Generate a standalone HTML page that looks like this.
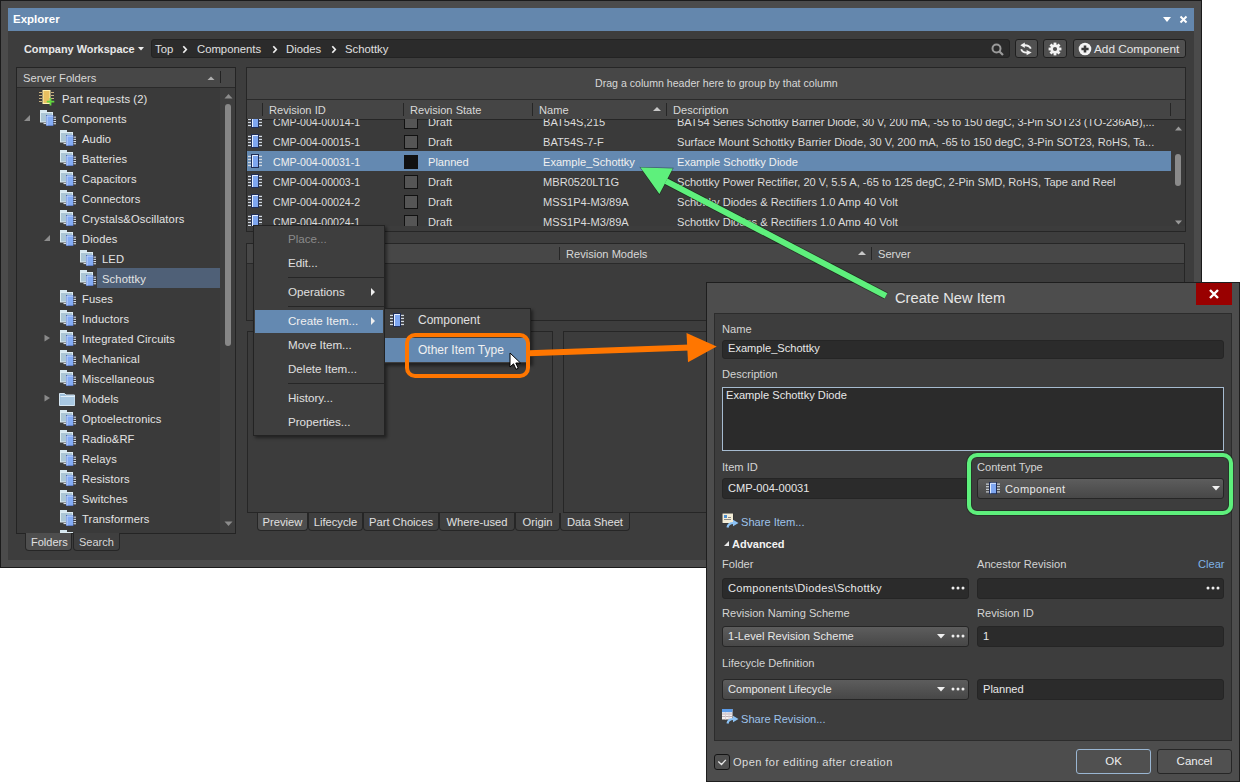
<!DOCTYPE html>
<html><head><meta charset="utf-8"><title>Explorer - Create New Item</title>
<style>
html,body{margin:0;padding:0;}
body{width:1240px;height:782px;position:relative;overflow:hidden;background:#ffffff;font-family:"Liberation Sans", sans-serif;}
.a{position:absolute;}
.t{white-space:pre;}
svg.a{overflow:visible;}
</style></head><body>
<div class="a" style="left:0px;top:0px;width:1202px;height:568px;background:#4b4b4b;border:1px solid #1b1b1b;box-sizing:border-box;"></div>
<div class="a" style="left:8px;top:8px;width:1186px;height:23px;background:#6487ad;"></div>
<div class="a t" style="left:13px;top:8px;font-size:11.5px;line-height:23px;color:#ffffff;font-weight:bold;">Explorer</div>
<svg class="a" style="left:1160px;top:14px" width="32" height="12" viewBox="0 0 32 12"><path d="M3 3h8l-4 5z" fill="#fff"/><path d="M20.5 2.5l6 6M26.5 2.5l-6 6" stroke="#fff" stroke-width="2"/></svg>
<div class="a" style="left:8px;top:31px;width:1186px;height:529px;background:#3d3d3d;"></div>
<div class="a t" style="left:24px;top:39px;font-size:10.9px;line-height:20px;color:#e8e8e8;font-weight:bold;">Company Workspace</div>
<svg class="a" style="left:137px;top:46px" width="8" height="6" viewBox="0 0 8 6"><path d="M1 1h6l-3 3.5z" fill="#eee"/></svg>
<div class="a" style="left:151px;top:39px;width:859px;height:19px;background:#2b2b2b;border:1px solid #232323;box-sizing:border-box;border-radius:3px;"></div>
<div class="a t" style="left:155px;top:39px;font-size:11.3px;line-height:20px;color:#e0e0e0;">Top</div>
<div class="a t" style="left:197px;top:39px;font-size:11.3px;line-height:20px;color:#e0e0e0;">Components</div>
<div class="a t" style="left:286px;top:39px;font-size:11.3px;line-height:20px;color:#e0e0e0;">Diodes</div>
<div class="a t" style="left:345px;top:39px;font-size:11.3px;line-height:20px;color:#e0e0e0;">Schottky</div>
<svg class="a" style="left:181px;top:45px" width="8" height="10" viewBox="0 0 8 10"><path d="M2.3 1.2l3 3.3l-3 3.3" stroke="#f0f0f0" stroke-width="1.7" fill="none"/></svg>
<svg class="a" style="left:271px;top:45px" width="8" height="10" viewBox="0 0 8 10"><path d="M2.3 1.2l3 3.3l-3 3.3" stroke="#f0f0f0" stroke-width="1.7" fill="none"/></svg>
<svg class="a" style="left:330px;top:45px" width="8" height="10" viewBox="0 0 8 10"><path d="M2.3 1.2l3 3.3l-3 3.3" stroke="#f0f0f0" stroke-width="1.7" fill="none"/></svg>
<svg class="a" style="left:990px;top:42px" width="16" height="16" viewBox="0 0 16 16"><circle cx="6.5" cy="6.5" r="4" stroke="#9a9a9a" stroke-width="2" fill="none"/><path d="M9.5 9.5l3.5 3.5" stroke="#9a9a9a" stroke-width="2.2"/></svg>
<div class="a" style="left:1015px;top:39px;width:23px;height:19px;background:#505050;border:1px solid #1f1f1f;box-sizing:border-box;border-radius:3px;"></div>
<div class="a" style="left:1043px;top:39px;width:24px;height:19px;background:#505050;border:1px solid #1f1f1f;box-sizing:border-box;border-radius:3px;"></div>
<div class="a" style="left:1073px;top:39px;width:113px;height:19px;background:#505050;border:1px solid #1f1f1f;box-sizing:border-box;border-radius:3px;"></div>
<svg class="a" style="left:1015px;top:40px" width="22" height="18" viewBox="0 0 22 18"><path d="M9 5.3Q14 5 15.8 8.6" stroke="#f2f2f2" stroke-width="1.9" fill="none"/><path d="M5.3 5.3L9.8 2.6V8z" fill="#f2f2f2"/><path d="M6.2 9.2Q7.5 12.8 12 12.6" stroke="#f2f2f2" stroke-width="1.9" fill="none"/><path d="M16.7 12.6L11.6 9.9V15.3z" fill="#f2f2f2"/></svg>
<svg class="a" style="left:1048px;top:42px" width="14" height="14" viewBox="0 0 14 14"><g fill="#f2f2f2"><rect x="5.6" y="0.6" width="2.8" height="3" transform="rotate(0 7 7)"/><rect x="5.6" y="0.6" width="2.8" height="3" transform="rotate(45 7 7)"/><rect x="5.6" y="0.6" width="2.8" height="3" transform="rotate(90 7 7)"/><rect x="5.6" y="0.6" width="2.8" height="3" transform="rotate(135 7 7)"/><rect x="5.6" y="0.6" width="2.8" height="3" transform="rotate(180 7 7)"/><rect x="5.6" y="0.6" width="2.8" height="3" transform="rotate(225 7 7)"/><rect x="5.6" y="0.6" width="2.8" height="3" transform="rotate(270 7 7)"/><rect x="5.6" y="0.6" width="2.8" height="3" transform="rotate(315 7 7)"/><circle cx="7" cy="7" r="4.6"/></g><circle cx="7" cy="7" r="2.1" fill="#505050"/></svg>
<svg class="a" style="left:1078px;top:42px" width="14" height="14" viewBox="0 0 14 14"><circle cx="7" cy="7" r="6.3" fill="#f4f4f4"/><path d="M7 3.4v7.2M3.4 7h7.2" stroke="#3a3a3a" stroke-width="2.6"/></svg>
<div class="a t" style="left:1094px;top:39px;font-size:11.8px;line-height:20px;color:#e8e8e8;">Add Component</div>
<div class="a" style="left:16px;top:67px;width:220px;height:467px;background:#3a3a3a;border:1px solid #242424;box-sizing:border-box;"></div>
<div class="a" style="left:17px;top:68px;width:218px;height:20px;background:#474747;border-bottom:1px solid #2a2a2a;box-sizing:border-box;"></div>
<div class="a t" style="left:23px;top:69px;font-size:11.2px;line-height:19px;color:#d8d8d8;">Server Folders</div>
<svg class="a" style="left:206px;top:75px" width="10" height="6" viewBox="0 0 10 6"><path d="M1.5 5h7l-3.5-3.5z" fill="#b0b0b0"/></svg>
<div class="a" style="left:220px;top:71px;width:1px;height:12px;background:#222;"></div>
<div class="a" style="left:220px;top:88px;width:15px;height:445px;background:#3e3e3e;"></div>
<svg class="a" style="left:224px;top:93px" width="9" height="6" viewBox="0 0 9 6"><path d="M0.5 5.5h8l-4-4.5z" fill="#8c8c8c"/></svg>
<div class="a" style="left:225px;top:104px;width:6px;height:242px;background:#888;border-radius:3px;"></div>
<svg class="a" style="left:224px;top:521px" width="9" height="6" viewBox="0 0 9 6"><path d="M0.5 0.5h8l-4 4.5z" fill="#8c8c8c"/></svg>
<div class="a" style="left:17px;top:88px;width:203px;height:445px;overflow:hidden;">
<svg class="a" style="left:22px;top:2px" width="17" height="17" viewBox="0 0 17 17"><rect x="4" y="0.5" width="7" height="13" fill="#e8c060" stroke="#fff2b0" stroke-width="1"/><rect x="0" y="2" width="3" height="1" fill="#c8b080"/><rect x="12" y="2" width="3" height="1" fill="#c8b080"/><rect x="0" y="5" width="3" height="1" fill="#c8b080"/><rect x="12" y="5" width="3" height="1" fill="#c8b080"/><rect x="0" y="8" width="3" height="1" fill="#c8b080"/><rect x="12" y="8" width="3" height="1" fill="#c8b080"/><rect x="0" y="11" width="3" height="1" fill="#c8b080"/><rect x="12" y="11" width="3" height="1" fill="#c8b080"/><path d="M11.5 8v7.5M7.8 11.7h7.5" stroke="#62d640" stroke-width="1.8"/></svg>
<div class="a t" style="left:45px;top:1px;font-size:11.2px;line-height:20px;color:#e4e4e4;letter-spacing:0.12px;">Part requests (2)</div>
<svg class="a" style="left:6px;top:26px" width="8" height="8" viewBox="0 0 8 8"><path d="M7 1v6h-6z" fill="#8c8c8c"/></svg>
<svg class="a" style="left:23px;top:22px" width="17" height="17" viewBox="0 0 17 17"><rect x="0" y="0" width="7" height="2.5" fill="#d5e6ef"/><rect x="0.5" y="2.5" width="12" height="9.5" fill="#abc5d4" stroke="#dcebf3" stroke-width="1"/><rect x="6" y="5" width="7.5" height="11" fill="#3a56a0"/><rect x="6.5" y="5.5" width="6.5" height="10" fill="#84acf4"/><path d="M7 15.5V6H13" stroke="#c4d8ff" stroke-width="1" fill="none"/><rect x="13.5" y="6.6" width="2.5" height="1.1" fill="#d5dce5"/><rect x="13.5" y="8.8" width="2.5" height="1.1" fill="#d5dce5"/><rect x="13.5" y="11.0" width="2.5" height="1.1" fill="#d5dce5"/><rect x="13.5" y="13.2" width="2.5" height="1.1" fill="#d5dce5"/><rect x="3.5" y="13" width="2.5" height="1.1" fill="#d5dce5"/></svg>
<div class="a t" style="left:45px;top:21px;font-size:11.2px;line-height:20px;color:#e4e4e4;letter-spacing:0.12px;">Components</div>
<svg class="a" style="left:43px;top:42px" width="17" height="17" viewBox="0 0 17 17"><rect x="0" y="0" width="7" height="2.5" fill="#d5e6ef"/><rect x="0.5" y="2.5" width="12" height="9.5" fill="#abc5d4" stroke="#dcebf3" stroke-width="1"/><rect x="6" y="5" width="7.5" height="11" fill="#3a56a0"/><rect x="6.5" y="5.5" width="6.5" height="10" fill="#84acf4"/><path d="M7 15.5V6H13" stroke="#c4d8ff" stroke-width="1" fill="none"/><rect x="13.5" y="6.6" width="2.5" height="1.1" fill="#d5dce5"/><rect x="13.5" y="8.8" width="2.5" height="1.1" fill="#d5dce5"/><rect x="13.5" y="11.0" width="2.5" height="1.1" fill="#d5dce5"/><rect x="13.5" y="13.2" width="2.5" height="1.1" fill="#d5dce5"/><rect x="3.5" y="13" width="2.5" height="1.1" fill="#d5dce5"/></svg>
<div class="a t" style="left:65px;top:41px;font-size:11.2px;line-height:20px;color:#e4e4e4;letter-spacing:0.12px;">Audio</div>
<svg class="a" style="left:43px;top:62px" width="17" height="17" viewBox="0 0 17 17"><rect x="0" y="0" width="7" height="2.5" fill="#d5e6ef"/><rect x="0.5" y="2.5" width="12" height="9.5" fill="#abc5d4" stroke="#dcebf3" stroke-width="1"/><rect x="6" y="5" width="7.5" height="11" fill="#3a56a0"/><rect x="6.5" y="5.5" width="6.5" height="10" fill="#84acf4"/><path d="M7 15.5V6H13" stroke="#c4d8ff" stroke-width="1" fill="none"/><rect x="13.5" y="6.6" width="2.5" height="1.1" fill="#d5dce5"/><rect x="13.5" y="8.8" width="2.5" height="1.1" fill="#d5dce5"/><rect x="13.5" y="11.0" width="2.5" height="1.1" fill="#d5dce5"/><rect x="13.5" y="13.2" width="2.5" height="1.1" fill="#d5dce5"/><rect x="3.5" y="13" width="2.5" height="1.1" fill="#d5dce5"/></svg>
<div class="a t" style="left:65px;top:61px;font-size:11.2px;line-height:20px;color:#e4e4e4;letter-spacing:0.12px;">Batteries</div>
<svg class="a" style="left:43px;top:82px" width="17" height="17" viewBox="0 0 17 17"><rect x="0" y="0" width="7" height="2.5" fill="#d5e6ef"/><rect x="0.5" y="2.5" width="12" height="9.5" fill="#abc5d4" stroke="#dcebf3" stroke-width="1"/><rect x="6" y="5" width="7.5" height="11" fill="#3a56a0"/><rect x="6.5" y="5.5" width="6.5" height="10" fill="#84acf4"/><path d="M7 15.5V6H13" stroke="#c4d8ff" stroke-width="1" fill="none"/><rect x="13.5" y="6.6" width="2.5" height="1.1" fill="#d5dce5"/><rect x="13.5" y="8.8" width="2.5" height="1.1" fill="#d5dce5"/><rect x="13.5" y="11.0" width="2.5" height="1.1" fill="#d5dce5"/><rect x="13.5" y="13.2" width="2.5" height="1.1" fill="#d5dce5"/><rect x="3.5" y="13" width="2.5" height="1.1" fill="#d5dce5"/></svg>
<div class="a t" style="left:65px;top:81px;font-size:11.2px;line-height:20px;color:#e4e4e4;letter-spacing:0.12px;">Capacitors</div>
<svg class="a" style="left:43px;top:102px" width="17" height="17" viewBox="0 0 17 17"><rect x="0" y="0" width="7" height="2.5" fill="#d5e6ef"/><rect x="0.5" y="2.5" width="12" height="9.5" fill="#abc5d4" stroke="#dcebf3" stroke-width="1"/><rect x="6" y="5" width="7.5" height="11" fill="#3a56a0"/><rect x="6.5" y="5.5" width="6.5" height="10" fill="#84acf4"/><path d="M7 15.5V6H13" stroke="#c4d8ff" stroke-width="1" fill="none"/><rect x="13.5" y="6.6" width="2.5" height="1.1" fill="#d5dce5"/><rect x="13.5" y="8.8" width="2.5" height="1.1" fill="#d5dce5"/><rect x="13.5" y="11.0" width="2.5" height="1.1" fill="#d5dce5"/><rect x="13.5" y="13.2" width="2.5" height="1.1" fill="#d5dce5"/><rect x="3.5" y="13" width="2.5" height="1.1" fill="#d5dce5"/></svg>
<div class="a t" style="left:65px;top:101px;font-size:11.2px;line-height:20px;color:#e4e4e4;letter-spacing:0.12px;">Connectors</div>
<svg class="a" style="left:43px;top:122px" width="17" height="17" viewBox="0 0 17 17"><rect x="0" y="0" width="7" height="2.5" fill="#d5e6ef"/><rect x="0.5" y="2.5" width="12" height="9.5" fill="#abc5d4" stroke="#dcebf3" stroke-width="1"/><rect x="6" y="5" width="7.5" height="11" fill="#3a56a0"/><rect x="6.5" y="5.5" width="6.5" height="10" fill="#84acf4"/><path d="M7 15.5V6H13" stroke="#c4d8ff" stroke-width="1" fill="none"/><rect x="13.5" y="6.6" width="2.5" height="1.1" fill="#d5dce5"/><rect x="13.5" y="8.8" width="2.5" height="1.1" fill="#d5dce5"/><rect x="13.5" y="11.0" width="2.5" height="1.1" fill="#d5dce5"/><rect x="13.5" y="13.2" width="2.5" height="1.1" fill="#d5dce5"/><rect x="3.5" y="13" width="2.5" height="1.1" fill="#d5dce5"/></svg>
<div class="a t" style="left:65px;top:121px;font-size:11.2px;line-height:20px;color:#e4e4e4;letter-spacing:0.12px;">Crystals&amp;Oscillators</div>
<svg class="a" style="left:26px;top:146px" width="8" height="8" viewBox="0 0 8 8"><path d="M7 1v6h-6z" fill="#8c8c8c"/></svg>
<svg class="a" style="left:43px;top:142px" width="17" height="17" viewBox="0 0 17 17"><rect x="0" y="0" width="7" height="2.5" fill="#d5e6ef"/><rect x="0.5" y="2.5" width="12" height="9.5" fill="#abc5d4" stroke="#dcebf3" stroke-width="1"/><rect x="6" y="5" width="7.5" height="11" fill="#3a56a0"/><rect x="6.5" y="5.5" width="6.5" height="10" fill="#84acf4"/><path d="M7 15.5V6H13" stroke="#c4d8ff" stroke-width="1" fill="none"/><rect x="13.5" y="6.6" width="2.5" height="1.1" fill="#d5dce5"/><rect x="13.5" y="8.8" width="2.5" height="1.1" fill="#d5dce5"/><rect x="13.5" y="11.0" width="2.5" height="1.1" fill="#d5dce5"/><rect x="13.5" y="13.2" width="2.5" height="1.1" fill="#d5dce5"/><rect x="3.5" y="13" width="2.5" height="1.1" fill="#d5dce5"/></svg>
<div class="a t" style="left:65px;top:141px;font-size:11.2px;line-height:20px;color:#e4e4e4;letter-spacing:0.12px;">Diodes</div>
<svg class="a" style="left:63px;top:162px" width="17" height="17" viewBox="0 0 17 17"><rect x="0" y="0" width="7" height="2.5" fill="#d5e6ef"/><rect x="0.5" y="2.5" width="12" height="9.5" fill="#abc5d4" stroke="#dcebf3" stroke-width="1"/><rect x="6" y="5" width="7.5" height="11" fill="#3a56a0"/><rect x="6.5" y="5.5" width="6.5" height="10" fill="#84acf4"/><path d="M7 15.5V6H13" stroke="#c4d8ff" stroke-width="1" fill="none"/><rect x="13.5" y="6.6" width="2.5" height="1.1" fill="#d5dce5"/><rect x="13.5" y="8.8" width="2.5" height="1.1" fill="#d5dce5"/><rect x="13.5" y="11.0" width="2.5" height="1.1" fill="#d5dce5"/><rect x="13.5" y="13.2" width="2.5" height="1.1" fill="#d5dce5"/><rect x="3.5" y="13" width="2.5" height="1.1" fill="#d5dce5"/></svg>
<div class="a t" style="left:85px;top:161px;font-size:11.2px;line-height:20px;color:#e4e4e4;letter-spacing:0.12px;">LED</div>
<div class="a" style="left:80px;top:180px;width:125px;height:20px;background:#4f6077;"></div>
<svg class="a" style="left:63px;top:182px" width="17" height="17" viewBox="0 0 17 17"><rect x="0" y="0" width="7" height="2.5" fill="#d5e6ef"/><rect x="0.5" y="2.5" width="12" height="9.5" fill="#abc5d4" stroke="#dcebf3" stroke-width="1"/><rect x="6" y="5" width="7.5" height="11" fill="#3a56a0"/><rect x="6.5" y="5.5" width="6.5" height="10" fill="#84acf4"/><path d="M7 15.5V6H13" stroke="#c4d8ff" stroke-width="1" fill="none"/><rect x="13.5" y="6.6" width="2.5" height="1.1" fill="#d5dce5"/><rect x="13.5" y="8.8" width="2.5" height="1.1" fill="#d5dce5"/><rect x="13.5" y="11.0" width="2.5" height="1.1" fill="#d5dce5"/><rect x="13.5" y="13.2" width="2.5" height="1.1" fill="#d5dce5"/><rect x="3.5" y="13" width="2.5" height="1.1" fill="#d5dce5"/></svg>
<div class="a t" style="left:85px;top:181px;font-size:11.2px;line-height:20px;color:#e4e4e4;letter-spacing:0.12px;">Schottky</div>
<svg class="a" style="left:43px;top:202px" width="17" height="17" viewBox="0 0 17 17"><rect x="0" y="0" width="7" height="2.5" fill="#d5e6ef"/><rect x="0.5" y="2.5" width="12" height="9.5" fill="#abc5d4" stroke="#dcebf3" stroke-width="1"/><rect x="6" y="5" width="7.5" height="11" fill="#3a56a0"/><rect x="6.5" y="5.5" width="6.5" height="10" fill="#84acf4"/><path d="M7 15.5V6H13" stroke="#c4d8ff" stroke-width="1" fill="none"/><rect x="13.5" y="6.6" width="2.5" height="1.1" fill="#d5dce5"/><rect x="13.5" y="8.8" width="2.5" height="1.1" fill="#d5dce5"/><rect x="13.5" y="11.0" width="2.5" height="1.1" fill="#d5dce5"/><rect x="13.5" y="13.2" width="2.5" height="1.1" fill="#d5dce5"/><rect x="3.5" y="13" width="2.5" height="1.1" fill="#d5dce5"/></svg>
<div class="a t" style="left:65px;top:201px;font-size:11.2px;line-height:20px;color:#e4e4e4;letter-spacing:0.12px;">Fuses</div>
<svg class="a" style="left:43px;top:222px" width="17" height="17" viewBox="0 0 17 17"><rect x="0" y="0" width="7" height="2.5" fill="#d5e6ef"/><rect x="0.5" y="2.5" width="12" height="9.5" fill="#abc5d4" stroke="#dcebf3" stroke-width="1"/><rect x="6" y="5" width="7.5" height="11" fill="#3a56a0"/><rect x="6.5" y="5.5" width="6.5" height="10" fill="#84acf4"/><path d="M7 15.5V6H13" stroke="#c4d8ff" stroke-width="1" fill="none"/><rect x="13.5" y="6.6" width="2.5" height="1.1" fill="#d5dce5"/><rect x="13.5" y="8.8" width="2.5" height="1.1" fill="#d5dce5"/><rect x="13.5" y="11.0" width="2.5" height="1.1" fill="#d5dce5"/><rect x="13.5" y="13.2" width="2.5" height="1.1" fill="#d5dce5"/><rect x="3.5" y="13" width="2.5" height="1.1" fill="#d5dce5"/></svg>
<div class="a t" style="left:65px;top:221px;font-size:11.2px;line-height:20px;color:#e4e4e4;letter-spacing:0.12px;">Inductors</div>
<svg class="a" style="left:26px;top:245px" width="8" height="10" viewBox="0 0 8 10"><path d="M1.5 1.8l5.5 3.3l-5.5 3.3z" fill="#8a8a8a"/></svg>
<svg class="a" style="left:43px;top:242px" width="17" height="17" viewBox="0 0 17 17"><rect x="0" y="0" width="7" height="2.5" fill="#d5e6ef"/><rect x="0.5" y="2.5" width="12" height="9.5" fill="#abc5d4" stroke="#dcebf3" stroke-width="1"/><rect x="6" y="5" width="7.5" height="11" fill="#3a56a0"/><rect x="6.5" y="5.5" width="6.5" height="10" fill="#84acf4"/><path d="M7 15.5V6H13" stroke="#c4d8ff" stroke-width="1" fill="none"/><rect x="13.5" y="6.6" width="2.5" height="1.1" fill="#d5dce5"/><rect x="13.5" y="8.8" width="2.5" height="1.1" fill="#d5dce5"/><rect x="13.5" y="11.0" width="2.5" height="1.1" fill="#d5dce5"/><rect x="13.5" y="13.2" width="2.5" height="1.1" fill="#d5dce5"/><rect x="3.5" y="13" width="2.5" height="1.1" fill="#d5dce5"/></svg>
<div class="a t" style="left:65px;top:241px;font-size:11.2px;line-height:20px;color:#e4e4e4;letter-spacing:0.12px;">Integrated Circuits</div>
<svg class="a" style="left:43px;top:262px" width="17" height="17" viewBox="0 0 17 17"><rect x="0" y="0" width="7" height="2.5" fill="#d5e6ef"/><rect x="0.5" y="2.5" width="12" height="9.5" fill="#abc5d4" stroke="#dcebf3" stroke-width="1"/><rect x="6" y="5" width="7.5" height="11" fill="#3a56a0"/><rect x="6.5" y="5.5" width="6.5" height="10" fill="#84acf4"/><path d="M7 15.5V6H13" stroke="#c4d8ff" stroke-width="1" fill="none"/><rect x="13.5" y="6.6" width="2.5" height="1.1" fill="#d5dce5"/><rect x="13.5" y="8.8" width="2.5" height="1.1" fill="#d5dce5"/><rect x="13.5" y="11.0" width="2.5" height="1.1" fill="#d5dce5"/><rect x="13.5" y="13.2" width="2.5" height="1.1" fill="#d5dce5"/><rect x="3.5" y="13" width="2.5" height="1.1" fill="#d5dce5"/></svg>
<div class="a t" style="left:65px;top:261px;font-size:11.2px;line-height:20px;color:#e4e4e4;letter-spacing:0.12px;">Mechanical</div>
<svg class="a" style="left:43px;top:282px" width="17" height="17" viewBox="0 0 17 17"><rect x="0" y="0" width="7" height="2.5" fill="#d5e6ef"/><rect x="0.5" y="2.5" width="12" height="9.5" fill="#abc5d4" stroke="#dcebf3" stroke-width="1"/><rect x="6" y="5" width="7.5" height="11" fill="#3a56a0"/><rect x="6.5" y="5.5" width="6.5" height="10" fill="#84acf4"/><path d="M7 15.5V6H13" stroke="#c4d8ff" stroke-width="1" fill="none"/><rect x="13.5" y="6.6" width="2.5" height="1.1" fill="#d5dce5"/><rect x="13.5" y="8.8" width="2.5" height="1.1" fill="#d5dce5"/><rect x="13.5" y="11.0" width="2.5" height="1.1" fill="#d5dce5"/><rect x="13.5" y="13.2" width="2.5" height="1.1" fill="#d5dce5"/><rect x="3.5" y="13" width="2.5" height="1.1" fill="#d5dce5"/></svg>
<div class="a t" style="left:65px;top:281px;font-size:11.2px;line-height:20px;color:#e4e4e4;letter-spacing:0.12px;">Miscellaneous</div>
<svg class="a" style="left:26px;top:305px" width="8" height="10" viewBox="0 0 8 10"><path d="M1.5 1.8l5.5 3.3l-5.5 3.3z" fill="#8a8a8a"/></svg>
<svg class="a" style="left:42px;top:303px" width="17" height="17" viewBox="0 0 17 17"><path d="M0.5 2.5h5l1.5 1.5h8.5v10.5H0.5z" fill="#9ec0dc" stroke="#d5e6f2" stroke-width="1"/><rect x="1.5" y="6" width="14" height="8" fill="#a8c8e2"/><rect x="1.5" y="5" width="14" height="1" fill="#e0eef8"/></svg>
<div class="a t" style="left:65px;top:301px;font-size:11.2px;line-height:20px;color:#e4e4e4;letter-spacing:0.12px;">Models</div>
<svg class="a" style="left:43px;top:322px" width="17" height="17" viewBox="0 0 17 17"><rect x="0" y="0" width="7" height="2.5" fill="#d5e6ef"/><rect x="0.5" y="2.5" width="12" height="9.5" fill="#abc5d4" stroke="#dcebf3" stroke-width="1"/><rect x="6" y="5" width="7.5" height="11" fill="#3a56a0"/><rect x="6.5" y="5.5" width="6.5" height="10" fill="#84acf4"/><path d="M7 15.5V6H13" stroke="#c4d8ff" stroke-width="1" fill="none"/><rect x="13.5" y="6.6" width="2.5" height="1.1" fill="#d5dce5"/><rect x="13.5" y="8.8" width="2.5" height="1.1" fill="#d5dce5"/><rect x="13.5" y="11.0" width="2.5" height="1.1" fill="#d5dce5"/><rect x="13.5" y="13.2" width="2.5" height="1.1" fill="#d5dce5"/><rect x="3.5" y="13" width="2.5" height="1.1" fill="#d5dce5"/></svg>
<div class="a t" style="left:65px;top:321px;font-size:11.2px;line-height:20px;color:#e4e4e4;letter-spacing:0.12px;">Optoelectronics</div>
<svg class="a" style="left:43px;top:342px" width="17" height="17" viewBox="0 0 17 17"><rect x="0" y="0" width="7" height="2.5" fill="#d5e6ef"/><rect x="0.5" y="2.5" width="12" height="9.5" fill="#abc5d4" stroke="#dcebf3" stroke-width="1"/><rect x="6" y="5" width="7.5" height="11" fill="#3a56a0"/><rect x="6.5" y="5.5" width="6.5" height="10" fill="#84acf4"/><path d="M7 15.5V6H13" stroke="#c4d8ff" stroke-width="1" fill="none"/><rect x="13.5" y="6.6" width="2.5" height="1.1" fill="#d5dce5"/><rect x="13.5" y="8.8" width="2.5" height="1.1" fill="#d5dce5"/><rect x="13.5" y="11.0" width="2.5" height="1.1" fill="#d5dce5"/><rect x="13.5" y="13.2" width="2.5" height="1.1" fill="#d5dce5"/><rect x="3.5" y="13" width="2.5" height="1.1" fill="#d5dce5"/></svg>
<div class="a t" style="left:65px;top:341px;font-size:11.2px;line-height:20px;color:#e4e4e4;letter-spacing:0.12px;">Radio&amp;RF</div>
<svg class="a" style="left:43px;top:362px" width="17" height="17" viewBox="0 0 17 17"><rect x="0" y="0" width="7" height="2.5" fill="#d5e6ef"/><rect x="0.5" y="2.5" width="12" height="9.5" fill="#abc5d4" stroke="#dcebf3" stroke-width="1"/><rect x="6" y="5" width="7.5" height="11" fill="#3a56a0"/><rect x="6.5" y="5.5" width="6.5" height="10" fill="#84acf4"/><path d="M7 15.5V6H13" stroke="#c4d8ff" stroke-width="1" fill="none"/><rect x="13.5" y="6.6" width="2.5" height="1.1" fill="#d5dce5"/><rect x="13.5" y="8.8" width="2.5" height="1.1" fill="#d5dce5"/><rect x="13.5" y="11.0" width="2.5" height="1.1" fill="#d5dce5"/><rect x="13.5" y="13.2" width="2.5" height="1.1" fill="#d5dce5"/><rect x="3.5" y="13" width="2.5" height="1.1" fill="#d5dce5"/></svg>
<div class="a t" style="left:65px;top:361px;font-size:11.2px;line-height:20px;color:#e4e4e4;letter-spacing:0.12px;">Relays</div>
<svg class="a" style="left:43px;top:382px" width="17" height="17" viewBox="0 0 17 17"><rect x="0" y="0" width="7" height="2.5" fill="#d5e6ef"/><rect x="0.5" y="2.5" width="12" height="9.5" fill="#abc5d4" stroke="#dcebf3" stroke-width="1"/><rect x="6" y="5" width="7.5" height="11" fill="#3a56a0"/><rect x="6.5" y="5.5" width="6.5" height="10" fill="#84acf4"/><path d="M7 15.5V6H13" stroke="#c4d8ff" stroke-width="1" fill="none"/><rect x="13.5" y="6.6" width="2.5" height="1.1" fill="#d5dce5"/><rect x="13.5" y="8.8" width="2.5" height="1.1" fill="#d5dce5"/><rect x="13.5" y="11.0" width="2.5" height="1.1" fill="#d5dce5"/><rect x="13.5" y="13.2" width="2.5" height="1.1" fill="#d5dce5"/><rect x="3.5" y="13" width="2.5" height="1.1" fill="#d5dce5"/></svg>
<div class="a t" style="left:65px;top:381px;font-size:11.2px;line-height:20px;color:#e4e4e4;letter-spacing:0.12px;">Resistors</div>
<svg class="a" style="left:43px;top:402px" width="17" height="17" viewBox="0 0 17 17"><rect x="0" y="0" width="7" height="2.5" fill="#d5e6ef"/><rect x="0.5" y="2.5" width="12" height="9.5" fill="#abc5d4" stroke="#dcebf3" stroke-width="1"/><rect x="6" y="5" width="7.5" height="11" fill="#3a56a0"/><rect x="6.5" y="5.5" width="6.5" height="10" fill="#84acf4"/><path d="M7 15.5V6H13" stroke="#c4d8ff" stroke-width="1" fill="none"/><rect x="13.5" y="6.6" width="2.5" height="1.1" fill="#d5dce5"/><rect x="13.5" y="8.8" width="2.5" height="1.1" fill="#d5dce5"/><rect x="13.5" y="11.0" width="2.5" height="1.1" fill="#d5dce5"/><rect x="13.5" y="13.2" width="2.5" height="1.1" fill="#d5dce5"/><rect x="3.5" y="13" width="2.5" height="1.1" fill="#d5dce5"/></svg>
<div class="a t" style="left:65px;top:401px;font-size:11.2px;line-height:20px;color:#e4e4e4;letter-spacing:0.12px;">Switches</div>
<svg class="a" style="left:43px;top:422px" width="17" height="17" viewBox="0 0 17 17"><rect x="0" y="0" width="7" height="2.5" fill="#d5e6ef"/><rect x="0.5" y="2.5" width="12" height="9.5" fill="#abc5d4" stroke="#dcebf3" stroke-width="1"/><rect x="6" y="5" width="7.5" height="11" fill="#3a56a0"/><rect x="6.5" y="5.5" width="6.5" height="10" fill="#84acf4"/><path d="M7 15.5V6H13" stroke="#c4d8ff" stroke-width="1" fill="none"/><rect x="13.5" y="6.6" width="2.5" height="1.1" fill="#d5dce5"/><rect x="13.5" y="8.8" width="2.5" height="1.1" fill="#d5dce5"/><rect x="13.5" y="11.0" width="2.5" height="1.1" fill="#d5dce5"/><rect x="13.5" y="13.2" width="2.5" height="1.1" fill="#d5dce5"/><rect x="3.5" y="13" width="2.5" height="1.1" fill="#d5dce5"/></svg>
<div class="a t" style="left:65px;top:421px;font-size:11.2px;line-height:20px;color:#e4e4e4;letter-spacing:0.12px;">Transformers</div>
<svg class="a" style="left:43px;top:442px" width="17" height="17" viewBox="0 0 17 17"><rect x="0" y="0" width="7" height="2.5" fill="#d5e6ef"/><rect x="0.5" y="2.5" width="12" height="9.5" fill="#abc5d4" stroke="#dcebf3" stroke-width="1"/><rect x="6" y="5" width="7.5" height="11" fill="#3a56a0"/><rect x="6.5" y="5.5" width="6.5" height="10" fill="#84acf4"/><path d="M7 15.5V6H13" stroke="#c4d8ff" stroke-width="1" fill="none"/><rect x="13.5" y="6.6" width="2.5" height="1.1" fill="#d5dce5"/><rect x="13.5" y="8.8" width="2.5" height="1.1" fill="#d5dce5"/><rect x="13.5" y="11.0" width="2.5" height="1.1" fill="#d5dce5"/><rect x="13.5" y="13.2" width="2.5" height="1.1" fill="#d5dce5"/><rect x="3.5" y="13" width="2.5" height="1.1" fill="#d5dce5"/></svg>
</div>
<div class="a" style="left:25px;top:533px;width:47px;height:18px;background:#4e4e4e;border:1px solid #262626;border-top:none;border-radius:0 0 4px 4px;box-sizing:border-box;"></div>
<div class="a" style="left:73px;top:533px;width:47px;height:18px;background:#3f3f3f;border:1px solid #262626;border-top:none;border-radius:0 0 4px 4px;box-sizing:border-box;"></div>
<div class="a t" style="left:31px;top:532px;font-size:11px;line-height:20px;color:#e0e0e0;">Folders</div>
<div class="a t" style="left:79px;top:532px;font-size:11px;line-height:20px;color:#d8d8d8;">Search</div>
<div class="a" style="left:246px;top:67px;width:940px;height:165px;background:#3a3a3a;border:1px solid #262626;box-sizing:border-box;"></div>
<div class="a" style="left:247px;top:68px;width:938px;height:32px;background:#474747;border-bottom:1px solid #2a2a2a;box-sizing:border-box;"></div>
<div class="a t" style="left:595px;top:73px;font-size:10.6px;line-height:20px;color:#d8d8d8;">Drag a column header here to group by that column</div>
<div class="a" style="left:247px;top:100px;width:938px;height:20px;background:#454545;border-bottom:1px solid #262626;box-sizing:border-box;"></div>
<div class="a" style="left:262px;top:103px;width:1px;height:13px;background:#262626;"></div>
<div class="a" style="left:403px;top:103px;width:1px;height:13px;background:#262626;"></div>
<div class="a" style="left:532px;top:103px;width:1px;height:13px;background:#262626;"></div>
<div class="a" style="left:666px;top:103px;width:1px;height:13px;background:#262626;"></div>
<div class="a" style="left:1170px;top:103px;width:1px;height:13px;background:#262626;"></div>
<div class="a t" style="left:269px;top:101px;font-size:11.1px;line-height:19px;color:#d8d8d8;">Revision ID</div>
<div class="a t" style="left:410px;top:101px;font-size:11.1px;line-height:19px;color:#d8d8d8;">Revision State</div>
<div class="a t" style="left:539px;top:101px;font-size:11.1px;line-height:19px;color:#d8d8d8;">Name</div>
<div class="a t" style="left:673px;top:101px;font-size:11.1px;line-height:19px;color:#d8d8d8;">Description</div>
<svg class="a" style="left:652px;top:106px" width="10" height="6" viewBox="0 0 10 6"><path d="M1 5h8l-4-4z" fill="#c8c8c8"/></svg>
<div class="a" style="left:247px;top:119px;width:928px;height:107px;overflow:hidden;">
<svg class="a" style="left:1px;top:-5px" width="14" height="15" viewBox="0 0 14 15" preserveAspectRatio="none"><rect x="3.5" y="0.5" width="7" height="13" fill="#7ea6f0" stroke="#1f2d55"/><path d="M4.5 13V1.5H10" stroke="#e6efff" stroke-width="1" fill="none"/><rect x="0" y="1.8" width="3" height="1.3" fill="#d2d9e2"/><rect x="11" y="1.8" width="3" height="1.3" fill="#d2d9e2"/><rect x="0" y="4.8" width="3" height="1.3" fill="#d2d9e2"/><rect x="11" y="4.8" width="3" height="1.3" fill="#d2d9e2"/><rect x="0" y="7.8" width="3" height="1.3" fill="#d2d9e2"/><rect x="11" y="7.8" width="3" height="1.3" fill="#d2d9e2"/><rect x="0" y="10.8" width="3" height="1.3" fill="#d2d9e2"/><rect x="11" y="10.8" width="3" height="1.3" fill="#d2d9e2"/></svg>
<div class="a" style="left:157px;top:-4px;width:14px;height:14px;background:#555;border:1px solid #111;box-sizing:border-box;"></div>
<div class="a t" style="left:26px;top:-7px;font-size:10.6px;line-height:20px;color:#dcdcdc;">CMP-004-00014-1</div>
<div class="a t" style="left:181px;top:-7px;font-size:11.1px;line-height:20px;color:#dcdcdc;">Draft</div>
<div class="a t" style="left:296px;top:-7px;font-size:11.1px;line-height:20px;color:#dcdcdc;">BAT54S,215</div>
<div class="a t" style="left:430px;top:-7px;font-size:11.1px;line-height:20px;color:#dcdcdc;letter-spacing:-0.08px;">BAT54 Series Schottky Barrier Diode, 30 V, 200 mA, -55 to 150 degC, 3-Pin SOT23 (TO-236AB),...</div>
<svg class="a" style="left:1px;top:15px" width="14" height="15" viewBox="0 0 14 15" preserveAspectRatio="none"><rect x="3.5" y="0.5" width="7" height="13" fill="#7ea6f0" stroke="#1f2d55"/><path d="M4.5 13V1.5H10" stroke="#e6efff" stroke-width="1" fill="none"/><rect x="0" y="1.8" width="3" height="1.3" fill="#d2d9e2"/><rect x="11" y="1.8" width="3" height="1.3" fill="#d2d9e2"/><rect x="0" y="4.8" width="3" height="1.3" fill="#d2d9e2"/><rect x="11" y="4.8" width="3" height="1.3" fill="#d2d9e2"/><rect x="0" y="7.8" width="3" height="1.3" fill="#d2d9e2"/><rect x="11" y="7.8" width="3" height="1.3" fill="#d2d9e2"/><rect x="0" y="10.8" width="3" height="1.3" fill="#d2d9e2"/><rect x="11" y="10.8" width="3" height="1.3" fill="#d2d9e2"/></svg>
<div class="a" style="left:157px;top:16px;width:14px;height:14px;background:#555;border:1px solid #111;box-sizing:border-box;"></div>
<div class="a t" style="left:26px;top:13px;font-size:10.6px;line-height:20px;color:#dcdcdc;">CMP-004-00015-1</div>
<div class="a t" style="left:181px;top:13px;font-size:11.1px;line-height:20px;color:#dcdcdc;">Draft</div>
<div class="a t" style="left:296px;top:13px;font-size:11.1px;line-height:20px;color:#dcdcdc;">BAT54S-7-F</div>
<div class="a t" style="left:430px;top:13px;font-size:11.1px;line-height:20px;color:#dcdcdc;">Surface Mount Schottky Barrier Diode, 30 V, 200 mA, -65 to 150 degC, 3-Pin SOT23, RoHS, Ta...</div>
<div class="a" style="left:0px;top:32px;width:924px;height:20px;background:#6489b1;"></div>
<svg class="a" style="left:1px;top:35px" width="14" height="15" viewBox="0 0 14 15" preserveAspectRatio="none"><rect x="3.5" y="0.5" width="7" height="13" fill="#7ea6f0" stroke="#1f2d55"/><path d="M4.5 13V1.5H10" stroke="#e6efff" stroke-width="1" fill="none"/><rect x="0" y="1.8" width="3" height="1.3" fill="#d2d9e2"/><rect x="11" y="1.8" width="3" height="1.3" fill="#d2d9e2"/><rect x="0" y="4.8" width="3" height="1.3" fill="#d2d9e2"/><rect x="11" y="4.8" width="3" height="1.3" fill="#d2d9e2"/><rect x="0" y="7.8" width="3" height="1.3" fill="#d2d9e2"/><rect x="11" y="7.8" width="3" height="1.3" fill="#d2d9e2"/><rect x="0" y="10.8" width="3" height="1.3" fill="#d2d9e2"/><rect x="11" y="10.8" width="3" height="1.3" fill="#d2d9e2"/></svg>
<div class="a" style="left:157px;top:36px;width:14px;height:14px;background:#111;border:1px solid #111;box-sizing:border-box;"></div>
<div class="a t" style="left:26px;top:33px;font-size:10.6px;line-height:20px;color:#f0f0f0;">CMP-004-00031-1</div>
<div class="a t" style="left:181px;top:33px;font-size:11.1px;line-height:20px;color:#f0f0f0;">Planned</div>
<div class="a t" style="left:296px;top:33px;font-size:11.1px;line-height:20px;color:#f0f0f0;">Example_Schottky</div>
<div class="a t" style="left:430px;top:33px;font-size:11.1px;line-height:20px;color:#f0f0f0;">Example Schottky Diode</div>
<svg class="a" style="left:1px;top:55px" width="14" height="15" viewBox="0 0 14 15" preserveAspectRatio="none"><rect x="3.5" y="0.5" width="7" height="13" fill="#7ea6f0" stroke="#1f2d55"/><path d="M4.5 13V1.5H10" stroke="#e6efff" stroke-width="1" fill="none"/><rect x="0" y="1.8" width="3" height="1.3" fill="#d2d9e2"/><rect x="11" y="1.8" width="3" height="1.3" fill="#d2d9e2"/><rect x="0" y="4.8" width="3" height="1.3" fill="#d2d9e2"/><rect x="11" y="4.8" width="3" height="1.3" fill="#d2d9e2"/><rect x="0" y="7.8" width="3" height="1.3" fill="#d2d9e2"/><rect x="11" y="7.8" width="3" height="1.3" fill="#d2d9e2"/><rect x="0" y="10.8" width="3" height="1.3" fill="#d2d9e2"/><rect x="11" y="10.8" width="3" height="1.3" fill="#d2d9e2"/></svg>
<div class="a" style="left:157px;top:56px;width:14px;height:14px;background:#555;border:1px solid #111;box-sizing:border-box;"></div>
<div class="a t" style="left:26px;top:53px;font-size:10.6px;line-height:20px;color:#dcdcdc;">CMP-004-00003-1</div>
<div class="a t" style="left:181px;top:53px;font-size:11.1px;line-height:20px;color:#dcdcdc;">Draft</div>
<div class="a t" style="left:296px;top:53px;font-size:11.1px;line-height:20px;color:#dcdcdc;">MBR0520LT1G</div>
<div class="a t" style="left:430px;top:53px;font-size:11.1px;line-height:20px;color:#dcdcdc;">Schottky Power Rectifier, 20 V, 5.5 A, -65 to 125 degC, 2-Pin SMD, RoHS, Tape and Reel</div>
<svg class="a" style="left:1px;top:75px" width="14" height="15" viewBox="0 0 14 15" preserveAspectRatio="none"><rect x="3.5" y="0.5" width="7" height="13" fill="#7ea6f0" stroke="#1f2d55"/><path d="M4.5 13V1.5H10" stroke="#e6efff" stroke-width="1" fill="none"/><rect x="0" y="1.8" width="3" height="1.3" fill="#d2d9e2"/><rect x="11" y="1.8" width="3" height="1.3" fill="#d2d9e2"/><rect x="0" y="4.8" width="3" height="1.3" fill="#d2d9e2"/><rect x="11" y="4.8" width="3" height="1.3" fill="#d2d9e2"/><rect x="0" y="7.8" width="3" height="1.3" fill="#d2d9e2"/><rect x="11" y="7.8" width="3" height="1.3" fill="#d2d9e2"/><rect x="0" y="10.8" width="3" height="1.3" fill="#d2d9e2"/><rect x="11" y="10.8" width="3" height="1.3" fill="#d2d9e2"/></svg>
<div class="a" style="left:157px;top:76px;width:14px;height:14px;background:#555;border:1px solid #111;box-sizing:border-box;"></div>
<div class="a t" style="left:26px;top:73px;font-size:10.6px;line-height:20px;color:#dcdcdc;">CMP-004-00024-2</div>
<div class="a t" style="left:181px;top:73px;font-size:11.1px;line-height:20px;color:#dcdcdc;">Draft</div>
<div class="a t" style="left:296px;top:73px;font-size:11.1px;line-height:20px;color:#dcdcdc;">MSS1P4-M3/89A</div>
<div class="a t" style="left:430px;top:73px;font-size:11.1px;line-height:20px;color:#dcdcdc;">Schottky Diodes &amp; Rectifiers 1.0 Amp 40 Volt</div>
<svg class="a" style="left:1px;top:95px" width="14" height="15" viewBox="0 0 14 15" preserveAspectRatio="none"><rect x="3.5" y="0.5" width="7" height="13" fill="#7ea6f0" stroke="#1f2d55"/><path d="M4.5 13V1.5H10" stroke="#e6efff" stroke-width="1" fill="none"/><rect x="0" y="1.8" width="3" height="1.3" fill="#d2d9e2"/><rect x="11" y="1.8" width="3" height="1.3" fill="#d2d9e2"/><rect x="0" y="4.8" width="3" height="1.3" fill="#d2d9e2"/><rect x="11" y="4.8" width="3" height="1.3" fill="#d2d9e2"/><rect x="0" y="7.8" width="3" height="1.3" fill="#d2d9e2"/><rect x="11" y="7.8" width="3" height="1.3" fill="#d2d9e2"/><rect x="0" y="10.8" width="3" height="1.3" fill="#d2d9e2"/><rect x="11" y="10.8" width="3" height="1.3" fill="#d2d9e2"/></svg>
<div class="a" style="left:157px;top:96px;width:14px;height:14px;background:#555;border:1px solid #111;box-sizing:border-box;"></div>
<div class="a t" style="left:26px;top:93px;font-size:10.6px;line-height:20px;color:#dcdcdc;">CMP-004-00024-1</div>
<div class="a t" style="left:181px;top:93px;font-size:11.1px;line-height:20px;color:#dcdcdc;">Draft</div>
<div class="a t" style="left:296px;top:93px;font-size:11.1px;line-height:20px;color:#dcdcdc;">MSS1P4-M3/89A</div>
<div class="a t" style="left:430px;top:93px;font-size:11.1px;line-height:20px;color:#dcdcdc;">Schottky Diodes &amp; Rectifiers 1.0 Amp 40 Volt</div>
</div>
<svg class="a" style="left:1174px;top:125px" width="9" height="6" viewBox="0 0 9 6"><path d="M1 5.5h7l-3.5-4z" fill="#999"/></svg>
<div class="a" style="left:1175px;top:154px;width:6px;height:32px;background:#8a8a8a;border-radius:3px;"></div>
<svg class="a" style="left:1174px;top:220px" width="9" height="6" viewBox="0 0 9 6"><path d="M1 0.5h7l-3.5 4z" fill="#999"/></svg>
<div class="a" style="left:247px;top:226px;width:938px;height:5px;background:#3c3c3c;"></div>
<div class="a" style="left:246px;top:243px;width:939px;height:78px;background:#3c3c3c;border:1px solid #262626;box-sizing:border-box;"></div>
<div class="a" style="left:247px;top:244px;width:937px;height:20px;background:#474747;border-bottom:1px solid #2a2a2a;box-sizing:border-box;"></div>
<div class="a" style="left:559px;top:247px;width:1px;height:13px;background:#262626;"></div>
<div class="a" style="left:871px;top:247px;width:1px;height:13px;background:#262626;"></div>
<div class="a t" style="left:566px;top:245px;font-size:11.1px;line-height:19px;color:#d8d8d8;">Revision Models</div>
<div class="a t" style="left:878px;top:245px;font-size:11.1px;line-height:19px;color:#d8d8d8;">Server</div>
<svg class="a" style="left:857px;top:250px" width="10" height="6" viewBox="0 0 10 6"><path d="M1 5h8l-4-4z" fill="#c8c8c8"/></svg>
<div class="a" style="left:247px;top:331px;width:306px;height:182px;background:#3c3c3c;border:1px solid #262626;box-sizing:border-box;"></div>
<div class="a" style="left:563px;top:331px;width:630px;height:182px;background:#3c3c3c;border:1px solid #262626;box-sizing:border-box;"></div>
<div class="a" style="left:257px;top:513px;width:51px;height:18px;background:#4e4e4e;border:1px solid #262626;border-top:none;border-radius:0 0 4px 4px;box-sizing:border-box;"></div>
<div class="a t" style="left:257px;top:512px;font-size:11.2px;line-height:20px;color:#e0e0e0;width:51px;text-align:center;">Preview</div>
<div class="a" style="left:308px;top:513px;width:55px;height:18px;background:#3f3f3f;border:1px solid #262626;border-top:none;border-radius:0 0 4px 4px;box-sizing:border-box;"></div>
<div class="a t" style="left:308px;top:512px;font-size:11.2px;line-height:20px;color:#e0e0e0;width:55px;text-align:center;">Lifecycle</div>
<div class="a" style="left:363px;top:513px;width:76px;height:18px;background:#3f3f3f;border:1px solid #262626;border-top:none;border-radius:0 0 4px 4px;box-sizing:border-box;"></div>
<div class="a t" style="left:363px;top:512px;font-size:11.2px;line-height:20px;color:#e0e0e0;width:76px;text-align:center;">Part Choices</div>
<div class="a" style="left:439px;top:513px;width:76px;height:18px;background:#3f3f3f;border:1px solid #262626;border-top:none;border-radius:0 0 4px 4px;box-sizing:border-box;"></div>
<div class="a t" style="left:439px;top:512px;font-size:11.2px;line-height:20px;color:#e0e0e0;width:76px;text-align:center;">Where-used</div>
<div class="a" style="left:515px;top:513px;width:45px;height:18px;background:#3f3f3f;border:1px solid #262626;border-top:none;border-radius:0 0 4px 4px;box-sizing:border-box;"></div>
<div class="a t" style="left:515px;top:512px;font-size:11.2px;line-height:20px;color:#e0e0e0;width:45px;text-align:center;">Origin</div>
<div class="a" style="left:560px;top:513px;width:70px;height:18px;background:#3f3f3f;border:1px solid #262626;border-top:none;border-radius:0 0 4px 4px;box-sizing:border-box;"></div>
<div class="a t" style="left:560px;top:512px;font-size:11.2px;line-height:20px;color:#e0e0e0;width:70px;text-align:center;">Data Sheet</div>
<div class="a" style="left:253px;top:225px;width:132px;height:211px;background:#3e3e3e;border:1px solid #232323;box-sizing:border-box;box-shadow:2px 2px 3px rgba(0,0,0,0.45);"></div>
<div class="a" style="left:255px;top:310px;width:128px;height:23px;background:#6489b1;"></div>
<div class="a t" style="left:288px;top:229px;font-size:11.6px;line-height:20px;color:#8a8a8a;">Place...</div>
<div class="a t" style="left:288px;top:253px;font-size:11.6px;line-height:20px;color:#e0e0e0;">Edit...</div>
<div class="a t" style="left:288px;top:282px;font-size:11.6px;line-height:20px;color:#e0e0e0;">Operations</div>
<div class="a t" style="left:288px;top:311px;font-size:11.6px;line-height:20px;color:#f0f0f0;">Create Item...</div>
<div class="a t" style="left:288px;top:335px;font-size:11.6px;line-height:20px;color:#e0e0e0;">Move Item...</div>
<div class="a t" style="left:288px;top:359px;font-size:11.6px;line-height:20px;color:#e0e0e0;">Delete Item...</div>
<div class="a t" style="left:288px;top:388px;font-size:11.6px;line-height:20px;color:#e0e0e0;">History...</div>
<div class="a t" style="left:288px;top:412px;font-size:11.6px;line-height:20px;color:#e0e0e0;">Properties...</div>
<div class="a" style="left:288px;top:277px;width:96px;height:1px;background:#262626;"></div>
<div class="a" style="left:288px;top:306px;width:96px;height:1px;background:#262626;"></div>
<div class="a" style="left:288px;top:383px;width:96px;height:1px;background:#262626;"></div>
<svg class="a" style="left:370px;top:287px" width="6" height="10" viewBox="0 0 6 10"><path d="M1 1l4 4l-4 4z" fill="#eee"/></svg>
<svg class="a" style="left:370px;top:316px" width="6" height="10" viewBox="0 0 6 10"><path d="M1 1l4 4l-4 4z" fill="#eee"/></svg>
<div class="a" style="left:384px;top:308px;width:147px;height:56px;background:#3e3e3e;border:1px solid #232323;box-sizing:border-box;box-shadow:2px 2px 3px rgba(0,0,0,0.45);"></div>
<div class="a" style="left:385px;top:338px;width:142px;height:24px;background:#6489b1;"></div>
<svg class="a" style="left:390px;top:313px" width="14" height="15" viewBox="0 0 14 15" preserveAspectRatio="none"><rect x="3.5" y="0.5" width="7" height="13" fill="#7ea6f0" stroke="#1f2d55"/><path d="M4.5 13V1.5H10" stroke="#e6efff" stroke-width="1" fill="none"/><rect x="0" y="1.8" width="3" height="1.3" fill="#d2d9e2"/><rect x="11" y="1.8" width="3" height="1.3" fill="#d2d9e2"/><rect x="0" y="4.8" width="3" height="1.3" fill="#d2d9e2"/><rect x="11" y="4.8" width="3" height="1.3" fill="#d2d9e2"/><rect x="0" y="7.8" width="3" height="1.3" fill="#d2d9e2"/><rect x="11" y="7.8" width="3" height="1.3" fill="#d2d9e2"/><rect x="0" y="10.8" width="3" height="1.3" fill="#d2d9e2"/><rect x="11" y="10.8" width="3" height="1.3" fill="#d2d9e2"/></svg>
<div class="a t" style="left:418px;top:310px;font-size:12px;line-height:20px;color:#e0e0e0;">Component</div>
<div class="a t" style="left:418px;top:340px;font-size:12px;line-height:20px;color:#f0f0f0;">Other Item Type</div>
<div class="a" style="left:405px;top:333px;width:125px;height:45px;border:4px solid #ff7600;border-radius:10px;box-sizing:border-box;"></div>
<svg class="a" style="left:509px;top:352px" width="13" height="19" viewBox="0 0 13 19"><path d="M1 1v14l3.5-3.2l2.5 5.5l2.3-1l-2.5-5.3h4.7z" fill="#fff" stroke="#000" stroke-width="1"/></svg>
<div class="a" style="left:706px;top:282px;width:534px;height:500px;background:#4d4d4d;border:1px solid #1e1e1e;box-sizing:border-box;"></div>
<div class="a t" style="left:895px;top:283px;font-size:14.7px;line-height:30px;color:#e6e6e6;">Create New Item</div>
<div class="a" style="left:1196px;top:283px;width:36px;height:22px;background:#990000;"></div>
<svg class="a" style="left:1208px;top:288px" width="12" height="12" viewBox="0 0 12 12"><path d="M2 2l8 8M10 2l-8 8" stroke="#fff" stroke-width="2.4"/></svg>
<div class="a" style="left:714px;top:313px;width:518px;height:428px;background:#3d3d3d;border:1px solid #2c2c2c;box-sizing:border-box;"></div>
<div class="a t" style="left:722px;top:319px;font-size:11.1px;line-height:20px;color:#d4d4d4;">Name</div>
<div class="a" style="left:722px;top:340px;width:502px;height:19px;background:#2b2b2b;border:1px solid #252525;box-sizing:border-box;border-radius:3px;"></div>
<div class="a t" style="left:728px;top:338px;font-size:11.1px;line-height:20px;color:#e8e8e8;">Example_Schottky</div>
<div class="a t" style="left:722px;top:364px;font-size:11.1px;line-height:20px;color:#d4d4d4;">Description</div>
<div class="a" style="left:722px;top:387px;width:502px;height:64px;background:#2b2b2b;border:1px solid #a6bbd0;box-sizing:border-box;"></div>
<div class="a t" style="left:726px;top:385px;font-size:11.1px;line-height:20px;color:#e8e8e8;">Example Schottky Diode</div>
<div class="a t" style="left:722px;top:457px;font-size:11.1px;line-height:20px;color:#d4d4d4;">Item ID</div>
<div class="a" style="left:722px;top:478px;width:247px;height:21px;background:#2b2b2b;border:1px solid #252525;box-sizing:border-box;border-radius:3px;"></div>
<div class="a t" style="left:728px;top:478px;font-size:11.1px;line-height:20px;color:#e8e8e8;">CMP-004-00031</div>
<div class="a t" style="left:977px;top:457px;font-size:11.1px;line-height:20px;color:#d4d4d4;">Content Type</div>
<div class="a" style="left:977px;top:478px;width:247px;height:21px;background:linear-gradient(#5d5d5d,#474747);border:1px solid #262626;box-sizing:border-box;border-radius:3px;"></div>
<div class="a t" style="left:1005px;top:479px;font-size:11.1px;line-height:20px;color:#e8e8e8;letter-spacing:0.35px;">Component</div>
<svg class="a" style="left:1211px;top:485px" width="10" height="6" viewBox="0 0 10 6"><path d="M1 1h8l-4 4.5z" fill="#f0f0f0"/></svg>
<svg class="a" style="left:986px;top:482px" width="14" height="13" viewBox="0 0 14 15" preserveAspectRatio="none"><rect x="3.5" y="0.5" width="7" height="13" fill="#7ea6f0" stroke="#1f2d55"/><path d="M4.5 13V1.5H10" stroke="#e6efff" stroke-width="1" fill="none"/><rect x="0" y="1.8" width="3" height="1.3" fill="#d2d9e2"/><rect x="11" y="1.8" width="3" height="1.3" fill="#d2d9e2"/><rect x="0" y="4.8" width="3" height="1.3" fill="#d2d9e2"/><rect x="11" y="4.8" width="3" height="1.3" fill="#d2d9e2"/><rect x="0" y="7.8" width="3" height="1.3" fill="#d2d9e2"/><rect x="11" y="7.8" width="3" height="1.3" fill="#d2d9e2"/><rect x="0" y="10.8" width="3" height="1.3" fill="#d2d9e2"/><rect x="11" y="10.8" width="3" height="1.3" fill="#d2d9e2"/></svg>
<div class="a" style="left:967px;top:453px;width:266px;height:62px;border:4px solid #5ef07c;border-radius:10px;box-sizing:border-box;box-shadow:0 0 0 1px rgba(0,40,10,0.35), inset 0 0 0 1px rgba(0,40,10,0.35);"></div>
<svg class="a" style="left:722px;top:513px" width="18" height="16" viewBox="0 0 18 16"><rect x="0" y="0" width="11.5" height="10.5" fill="#2a2a2a" opacity="0.6"/><rect x="0.5" y="0.5" width="10.5" height="9.5" fill="#f3ecd6"/><rect x="2" y="2" width="3" height="3" fill="#4d8fd0"/><rect x="6" y="4" width="3" height="0.8" fill="#707070"/><rect x="2" y="6.2" width="7" height="0.8" fill="#707070"/><path d="M5.5 14.5c0.5-3 2.5-4.5 6-4.5" stroke="#8cc2f4" stroke-width="2.2" fill="none"/><path d="M11 6.8l5.5 3.2l-5.5 3.2z" fill="#8cc2f4"/></svg>
<div class="a t" style="left:741px;top:512px;font-size:11.1px;line-height:20px;color:#9dc2ea;">Share Item...</div>
<svg class="a" style="left:723px;top:540px" width="7" height="7" viewBox="0 0 7 7"><path d="M6 1v5h-5z" fill="#e8e8e8"/></svg>
<div class="a t" style="left:732px;top:534px;font-size:11px;line-height:20px;color:#f2f2f2;font-weight:bold;">Advanced</div>
<div class="a t" style="left:722px;top:554px;font-size:11.1px;line-height:20px;color:#d4d4d4;">Folder</div>
<div class="a t" style="left:977px;top:554px;font-size:11.1px;line-height:20px;color:#d4d4d4;">Ancestor Revision</div>
<div class="a t" style="left:1198px;top:554px;font-size:11.1px;line-height:20px;color:#7fb2e6;">Clear</div>
<div class="a" style="left:722px;top:578px;width:247px;height:21px;background:#2b2b2b;border:1px solid #252525;box-sizing:border-box;border-radius:3px;"></div>
<div class="a t" style="left:728px;top:578px;font-size:11.1px;line-height:20px;color:#e8e8e8;letter-spacing:0.3px;">Components\Diodes\Schottky</div>
<svg class="a" style="left:951px;top:586px" width="14" height="4" viewBox="0 0 14 4"><circle cx="2" cy="2" r="1.5" fill="#eee"/><circle cx="7" cy="2" r="1.5" fill="#eee"/><circle cx="12" cy="2" r="1.5" fill="#eee"/></svg>
<div class="a" style="left:977px;top:578px;width:247px;height:21px;background:#2b2b2b;border:1px solid #252525;box-sizing:border-box;border-radius:3px;"></div>
<svg class="a" style="left:1206px;top:586px" width="14" height="4" viewBox="0 0 14 4"><circle cx="2" cy="2" r="1.5" fill="#eee"/><circle cx="7" cy="2" r="1.5" fill="#eee"/><circle cx="12" cy="2" r="1.5" fill="#eee"/></svg>
<div class="a t" style="left:722px;top:603px;font-size:11.1px;line-height:20px;color:#d4d4d4;">Revision Naming Scheme</div>
<div class="a t" style="left:977px;top:603px;font-size:11.1px;line-height:20px;color:#d4d4d4;">Revision ID</div>
<div class="a" style="left:722px;top:626px;width:247px;height:21px;background:linear-gradient(#5d5d5d,#474747);border:1px solid #262626;box-sizing:border-box;border-radius:3px;"></div>
<div class="a t" style="left:728px;top:626px;font-size:11.1px;line-height:20px;color:#e8e8e8;">1-Level Revision Scheme</div>
<svg class="a" style="left:951px;top:634px" width="14" height="4" viewBox="0 0 14 4"><circle cx="2" cy="2" r="1.5" fill="#eee"/><circle cx="7" cy="2" r="1.5" fill="#eee"/><circle cx="12" cy="2" r="1.5" fill="#eee"/></svg>
<svg class="a" style="left:936px;top:633px" width="10" height="6" viewBox="0 0 10 6"><path d="M1 1h8l-4 4.5z" fill="#f0f0f0"/></svg>
<div class="a" style="left:977px;top:626px;width:247px;height:21px;background:#2b2b2b;border:1px solid #252525;box-sizing:border-box;border-radius:3px;"></div>
<div class="a t" style="left:983px;top:626px;font-size:11.1px;line-height:20px;color:#e8e8e8;">1</div>
<div class="a t" style="left:722px;top:653px;font-size:11.1px;line-height:20px;color:#d4d4d4;">Lifecycle Definition</div>
<div class="a" style="left:722px;top:679px;width:247px;height:21px;background:linear-gradient(#5d5d5d,#474747);border:1px solid #262626;box-sizing:border-box;border-radius:3px;"></div>
<div class="a t" style="left:728px;top:679px;font-size:11.1px;line-height:20px;color:#e8e8e8;">Component Lifecycle</div>
<svg class="a" style="left:951px;top:687px" width="14" height="4" viewBox="0 0 14 4"><circle cx="2" cy="2" r="1.5" fill="#eee"/><circle cx="7" cy="2" r="1.5" fill="#eee"/><circle cx="12" cy="2" r="1.5" fill="#eee"/></svg>
<svg class="a" style="left:936px;top:686px" width="10" height="6" viewBox="0 0 10 6"><path d="M1 1h8l-4 4.5z" fill="#f0f0f0"/></svg>
<div class="a" style="left:977px;top:679px;width:247px;height:21px;background:#2b2b2b;border:1px solid #252525;box-sizing:border-box;border-radius:3px;"></div>
<div class="a t" style="left:983px;top:679px;font-size:11.1px;line-height:20px;color:#e8e8e8;">Planned</div>
<svg class="a" style="left:722px;top:709px" width="18" height="16" viewBox="0 0 18 16"><rect x="0" y="0" width="10.5" height="10.5" fill="#f4f0f0"/><rect x="0" y="0" width="10.5" height="3.2" fill="#5b9be8"/><path d="M0 5h10.5M0 7.5h10.5" stroke="#b0a8b0" stroke-width="0.9"/><path d="M3.5 3v7.5M7 3v7.5" stroke="#d8c8d0" stroke-width="0.9"/><path d="M5.5 14.5c0.5-3 2.5-4.5 6-4.5" stroke="#8cc2f4" stroke-width="2.2" fill="none"/><path d="M11 6.8l5.5 3.2l-5.5 3.2z" fill="#8cc2f4"/></svg>
<div class="a t" style="left:741px;top:709px;font-size:11.1px;line-height:20px;color:#9dc2ea;">Share Revision...</div>
<div class="a" style="left:714px;top:754px;width:16px;height:16px;background:#4f4f4f;border:1px solid #151515;border-radius:3px;box-sizing:border-box;"></div>
<svg class="a" style="left:714px;top:754px" width="16" height="16" viewBox="0 0 16 16"><path d="M4.3 7.5l3.2 3l4.3-4.6" stroke="#e8e8e8" stroke-width="1.3" fill="none"/></svg>
<div class="a t" style="left:733px;top:752px;font-size:11.1px;line-height:20px;color:#dcdcdc;letter-spacing:0.42px;">Open for editing after creation</div>
<div class="a" style="left:1076px;top:749px;width:75px;height:25px;background:#505050;border:1px solid #9ab6d2;border-radius:3px;box-sizing:border-box;"></div>
<div class="a" style="left:1157px;top:749px;width:75px;height:25px;background:#505050;border:1px solid #262626;border-radius:3px;box-sizing:border-box;"></div>
<div class="a t" style="left:1076px;top:751px;font-size:11.5px;line-height:20px;color:#eeeeee;width:75px;text-align:center;">OK</div>
<div class="a t" style="left:1157px;top:751px;font-size:11.5px;line-height:20px;color:#eeeeee;width:75px;text-align:center;">Cancel</div>
<svg class="a" style="left:0;top:0" width="1240" height="782" viewBox="0 0 1240 782"><g stroke="rgba(0,30,0,0.45)" stroke-width="1.2" fill="none"><path d="M666 181.2L886 295.8" stroke-width="7.5"/><path d="M640.5 167.5L672.8 168.4L659.4 194z"/></g><path d="M666 181.2L886 295.8" stroke="#5ef07c" stroke-width="6"/><path d="M640.5 167.5L672.8 168.4L659.4 194z" fill="#5ef07c"/><path d="M529 353.2L690 347.6" stroke="#ff7600" stroke-width="6"/><path d="M716.7 346.5L686.5 333L688 362.2z" fill="#ff7600"/></svg>
</body></html>
